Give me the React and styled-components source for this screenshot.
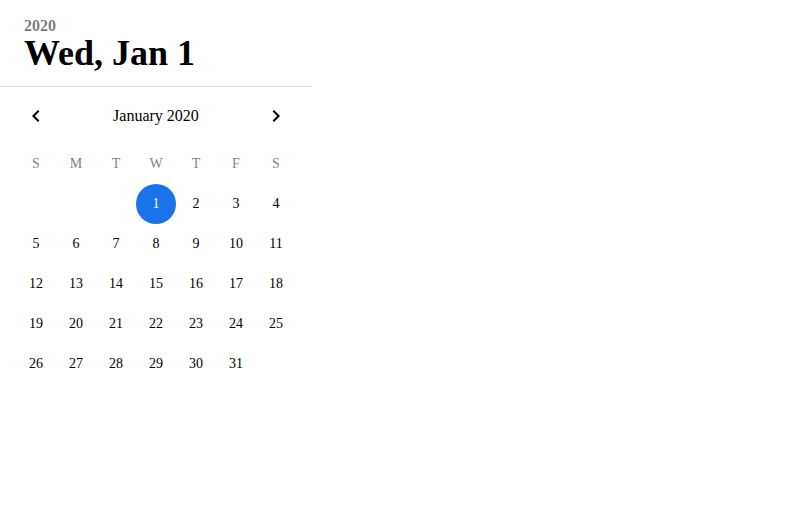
import React from "react";
import styled, { createGlobalStyle } from "styled-components";

const Global = createGlobalStyle`
  html, body { margin: 0; padding: 0; background: #fff; }
  body { font-family: "Liberation Serif", "Times New Roman", serif; color: #000; }
`;

const Panel = styled.div`
  width: 312px;
  display: flex;
  flex-direction: column;
`;

const Header = styled.div`
  padding: 18px 24px 13px;
  border-bottom: 1px solid #e0e0e0;
  display: flex;
  flex-direction: column;
`;

const Year = styled.div`
  font-size: 16px;
  font-weight: bold;
  line-height: 15px;
  color: rgba(0, 0, 0, 0.54);
`;

const Title = styled.div`
  font-size: 36px;
  font-weight: bold;
  line-height: 40px;
`;

const Nav = styled.div`
  display: flex;
  align-items: center;
  justify-content: space-between;
  padding: 9px 16px 8px;
`;

const NavButton = styled.div`
  width: 40px;
  height: 40px;
  display: flex;
  align-items: center;
  justify-content: center;
`;

const MonthLabel = styled.div`
  font-size: 16px;
`;

const Grid = styled.div`
  display: grid;
  grid-template-columns: repeat(7, 40px);
  grid-auto-rows: 40px;
  padding: 0 16px;
`;

const Cell = styled.div`
  display: flex;
  align-items: center;
  justify-content: center;
  font-size: 14px;
  border-radius: 50%;
  color: ${(p) => (p.$head ? "#7b8494" : p.$selected ? "#fff" : "#000")};
  background: ${(p) => (p.$selected ? "#1a73e8" : "transparent")};
`;

const Chevron = ({ dir }) => (
  <svg width="24" height="24" viewBox="0 0 24 24" fill="#000">
    {dir === "left" ? (
      <path d="M15.41 7.41L14 6l-6 6 6 6 1.41-1.41L10.83 12z" />
    ) : (
      <path d="M8.59 16.59L10 18l6-6-6-6-1.41 1.41L13.17 12z" />
    )}
  </svg>
);

const heads = ["S", "M", "T", "W", "T", "F", "S"];

export default function App() {
  const cells = [];
  for (let i = 0; i < 3; i++) cells.push(null);
  for (let d = 1; d <= 31; d++) cells.push(d);
  return (
    <>
      <Global />
      <Panel>
        <Header>
          <Year>2020</Year>
          <Title>Wed, Jan 1</Title>
        </Header>
        <Nav>
          <NavButton>
            <Chevron dir="left" />
          </NavButton>
          <MonthLabel>January 2020</MonthLabel>
          <NavButton>
            <Chevron dir="right" />
          </NavButton>
        </Nav>
        <Grid>
          {heads.map((h, i) => (
            <Cell key={"h" + i} $head>
              {h}
            </Cell>
          ))}
          {cells.map((d, i) => (
            <Cell key={i} $selected={d === 1}>
              {d ?? ""}
            </Cell>
          ))}
        </Grid>
      </Panel>
    </>
  );
}
